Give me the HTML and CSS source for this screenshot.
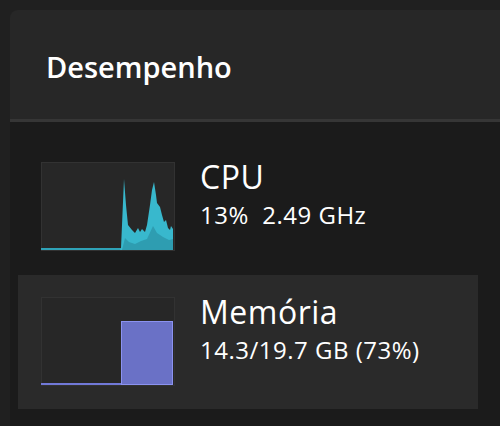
FILE: index.html
```html
<!DOCTYPE html>
<html lang="pt">
<head>
    <meta charset="UTF-8">
    <meta name="viewport" content="width=device-width, initial-scale=1.0">
    <title>Desempenho</title>
    <link rel="stylesheet" href="styles.css">
</head>
<body>
    <div class="window">
        <div class="header">
            <h1>Desempenho</h1>
        </div>
        <div class="content">
            <div class="row">
                <div class="graph">
                    <svg width="134" height="89" viewBox="0 0 134 89">
                        <rect x="0" y="86" width="80" height="2" fill="#2fa3b8"/>
                        <polygon fill="#38b8cd" points="79,88 80,86 83,17 85,43 87,63 91,68 94,71 97,66 99,70 101,67 104,70 106,63 109,43 111,28 113,20 115,33 116,41 119,45 121,53 123,60 125,58 127,66 129,68 130,64 132,67 132,88"/>
                        <polygon fill="#2e9db1" points="81,88 84,76 88,80 94,82 100,79 106,77 112,64 116,71 122,75 128,78 132,77 132,88"/>
                    </svg>
                </div>
                <div class="info">
                    <div class="name">CPU</div>
                    <div class="detail">13%&nbsp;&nbsp;2.49 GHz</div>
                </div>
            </div>
            <div class="row selected">
                <div class="graph">
                    <svg width="134" height="89" viewBox="0 0 134 89">
                        <rect x="0" y="86" width="81" height="2" fill="#7179d8"/>
                        <rect x="80.5" y="24.5" width="51" height="63" fill="#6a71c6" stroke="#8b92f0" stroke-width="1"/>
                    </svg>
                </div>
                <div class="info">
                    <div class="name">Memória</div>
                    <div class="detail">14.3/19.7 GB (73%)</div>
                </div>
            </div>
        </div>
    </div>
</body>
</html>
```

FILE: styles.css
```css
body {
    margin: 0;
    padding: 0;
    background-color: #202020;
    font-family: "Open Sans", "Noto Sans", sans-serif;
    color: #ffffff;
    overflow: hidden;
}

.window {
    padding: 10px 0 0 10px;
    height: 416px;
    display: flex;
    flex-direction: column;
}

.header {
    background-color: #272727;
    border-radius: 8px 0 0 0;
    height: 70px;
    padding: 39px 0 0 36px;
    border-bottom: 3px solid #363636;
}

h1 {
    margin: 0;
    font-size: 29px;
    line-height: 36px;
    font-weight: 600;
}

.content {
    flex: 1;
    background-color: #1b1b1b;
    padding: 18px 22px 0 8px;
    display: flex;
    flex-direction: column;
    gap: 1px;
}

.row {
    height: 134px;
    display: flex;
    align-items: flex-start;
    padding-left: 23px;
    gap: 25px;
}

.row.selected {
    background-color: #2a2a2a;
}

.graph {
    margin-top: 22px;
    width: 134px;
    height: 89px;
    background-color: #272727;
    box-shadow: inset 0 0 0 1px #323232;
}

.graph svg {
    display: block;
}

.info {
    padding-top: 18px;
}

.name {
    font-size: 32px;
    line-height: 38px;
    letter-spacing: 0.5px;
}

.detail {
    font-size: 24px;
    line-height: 28px;
    margin-top: 5px;
    letter-spacing: 0.5px;
}
```
